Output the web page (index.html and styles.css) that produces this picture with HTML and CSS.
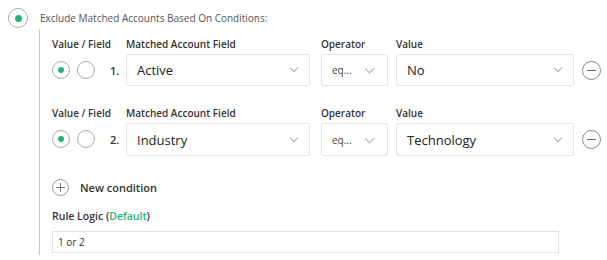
FILE: index.html
```html
<!DOCTYPE html>
<html>
<head>
<meta charset="utf-8">
<link rel="stylesheet" href="styles.css">
</head>
<body>
<div class="page">
  <div class="header">
    <span class="radio radio-lg checked"><span class="dot"></span></span>
    <span class="title">Exclude Matched Accounts Based On Conditions:</span>
  </div>
  <div class="section">
    <div class="cond">
      <div class="lbl">Value / Field</div>
      <div class="lbl">Matched Account Field</div>
      <div class="lbl">Operator</div>
      <div class="lbl">Value</div>
      <div></div>
      <div class="vf">
        <span class="radio checked"><span class="dot"></span></span>
        <span class="radio"></span>
        <span class="num">1.</span>
      </div>
      <div class="sel w-field"><span>Active</span><i class="chev"></i></div>
      <div class="sel w-op small"><span>eq...</span><i class="chev"></i></div>
      <div class="sel w-val"><span>No</span><i class="chev"></i></div>
      <div class="icon-cell"><span class="circ minus"></span></div>
    </div>
    <div class="cond">
      <div class="lbl">Value / Field</div>
      <div class="lbl">Matched Account Field</div>
      <div class="lbl">Operator</div>
      <div class="lbl">Value</div>
      <div></div>
      <div class="vf">
        <span class="radio checked"><span class="dot"></span></span>
        <span class="radio"></span>
        <span class="num">2.</span>
      </div>
      <div class="sel w-field"><span>Industry</span><i class="chev"></i></div>
      <div class="sel w-op small"><span>eq...</span><i class="chev"></i></div>
      <div class="sel w-val"><span>Technology</span><i class="chev"></i></div>
      <div class="icon-cell"><span class="circ minus"></span></div>
    </div>
    <div class="newcond">
      <span class="circ plus"></span>
      <span>New condition</span>
    </div>
    <div class="rule-lbl">Rule Logic (<span class="green">Default</span>)</div>
    <div class="rule-input">1 or 2</div>
  </div>
</div>
</body>
</html>
```
FILE: styles.css
```css
* { box-sizing: border-box; }
html, body { margin: 0; padding: 0; background: #fff; }
body {
  font-family: "Open Sans", "Noto Sans", sans-serif;
  color: #333;
  width: 607px;
  height: 260px;
  overflow: hidden;
}
.page { padding: 8px 0 0 8px; }
.header {
  display: flex;
  align-items: center;
  height: 20px;
}
.title {
  margin-left: 12px;
  font-size: 10px;
  color: #555;
  line-height: 20px;
}
.radio {
  display: inline-flex;
  align-items: center;
  justify-content: center;
  width: 18px;
  height: 18px;
  border: 1px solid #aaa;
  border-radius: 50%;
  background: #fff;
  flex: none;
}
.radio-lg { width: 20px; height: 20px; }
.radio .dot {
  width: 6px;
  height: 6px;
  border-radius: 50%;
  background: #22b573;
}
.radio-lg .dot { width: 7px; height: 7px; }
.section {
  margin-left: 31px;
  margin-top: 1px;
  border-left: 1px solid #c8c8c8;
  padding: 7px 0 2px 12px;
  height: 226px;
}
.cond {
  display: grid;
  grid-template-columns: 74px 195px 75px 186px 20px;
  grid-template-rows: 16px 32px;
  row-gap: 2px;
  margin-bottom: 19px;
}
.cond + .cond { margin-bottom: 23px; }
.cond:nth-child(2) .sel { height: 33px; }
.lbl {
  font-size: 10px;
  font-weight: 600;
  color: #333;
  line-height: 16px;
  white-space: nowrap;
}
.vf {
  display: flex;
  align-items: center;
}
.vf .radio + .radio { margin-left: 7px; }
.num {
  margin-left: 15px;
  font-size: 11px;
  font-weight: 600;
  color: #333;
}
.sel {
  position: relative;
  display: flex;
  align-items: center;
  height: 32px;
  border: 1px solid #e3e3e3;
  border-radius: 2px;
  padding-left: 10px;
  font-size: 13px;
  color: #222;
}
.sel.small { font-size: 10px; color: #444; }
.w-field { width: 184px; }
.w-op { width: 67px; }
.w-val { width: 178px; }
.chev {
  position: absolute;
  right: 12px;
  top: 50%;
  width: 6px;
  height: 6px;
  margin-top: -5px;
  border-right: 1px solid #aaa;
  border-bottom: 1px solid #aaa;
  transform: rotate(45deg);
}
.w-op .chev { right: 14px; width: 7px; height: 7px; }
.icon-cell {
  display: flex;
  align-items: center;
}
.circ {
  position: relative;
  display: inline-block;
  width: 19px;
  height: 19px;
  border: 1px solid #888;
  border-radius: 50%;
  flex: none;
}
.circ::before {
  content: "";
  position: absolute;
  left: 4px;
  right: 4px;
  top: 8px;
  height: 1px;
  background: #666;
}
.plus {
  width: 17px;
  height: 17px;
  border-color: #999;
}
.plus::before { top: 7px; left: 3px; right: 3px; background: #777; }
.plus::after {
  content: "";
  position: absolute;
  top: 3px;
  bottom: 3px;
  left: 7px;
  width: 1px;
  background: #777;
}
.newcond {
  display: flex;
  align-items: center;
  height: 18px;
  font-size: 11px;
  font-weight: 600;
  color: #333;
}
.newcond .circ { margin-right: 11px; }
.rule-lbl {
  margin-top: 12px;
  font-size: 10.5px;
  font-weight: 600;
  line-height: 16px;
  color: #333;
}
.green { color: #22b573; }
.rule-input {
  margin-top: 7px;
  width: 507px;
  height: 22px;
  border: 1px solid #e3e3e3;
  padding-left: 5px;
  font-size: 10px;
  line-height: 20px;
  color: #333;
}
```
